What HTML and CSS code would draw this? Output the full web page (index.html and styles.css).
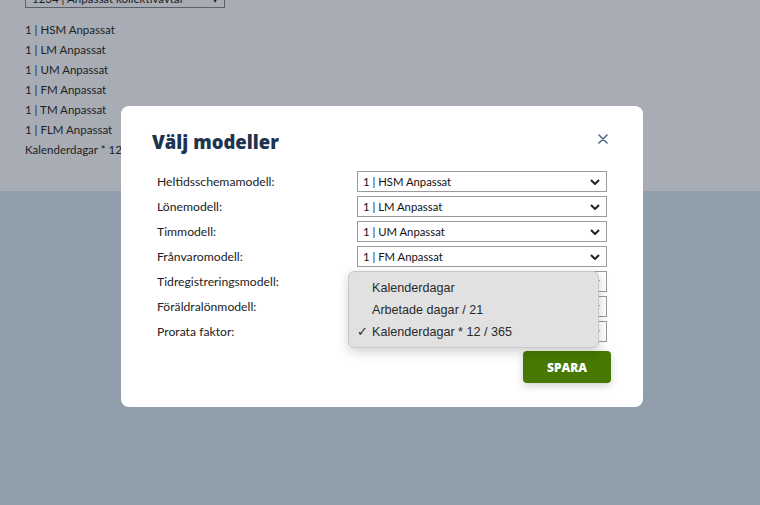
FILE: index.html
```html
<!doctype HTML>
<html>
    <head>
        <title>Välj modeller</title>
        <meta content="text/html;charset=utf-8" http-equiv="Content-Type">
        <meta name="viewport" content="width=device-width, initial-scale=1">
        <link rel="stylesheet" href="styles.css">
    </head>

    <body>
        <section class="page">
            <div class="page-select">1234 | Anpassat kollektivavtal <span class="caret">▾</span></div>
            <ul class="summary">
                <li>1 | HSM Anpassat</li>
                <li>1 | LM Anpassat</li>
                <li>1 | UM Anpassat</li>
                <li>1 | FM Anpassat</li>
                <li>1 | TM Anpassat</li>
                <li>1 | FLM Anpassat</li>
                <li>Kalenderdagar * 12 / 365</li>
            </ul>
        </section>
        <section class="page-lower"></section>

        <div class="modal">
            <header class="modal-head">
                <h1>Välj modeller</h1>
                <button class="close" title="Stäng">
                    <svg width="10" height="10" viewBox="0 0 10 10"><path d="M1 1 L9 9 M9 1 L1 9" stroke="#4d6a8e" stroke-width="1.6" stroke-linecap="round"/></svg>
                </button>
            </header>

            <div class="rows">
                <div class="row"><label>Heltidsschemamodell:</label><div class="select">1 | HSM Anpassat<svg class="chev" width="10" height="6" viewBox="0 0 10 6"><path d="M1 1 L5 5 L9 1" fill="none" stroke="#222" stroke-width="2"/></svg></div></div>
                <div class="row"><label>Lönemodell:</label><div class="select">1 | LM Anpassat<svg class="chev" width="10" height="6" viewBox="0 0 10 6"><path d="M1 1 L5 5 L9 1" fill="none" stroke="#222" stroke-width="2"/></svg></div></div>
                <div class="row"><label>Timmodell:</label><div class="select">1 | UM Anpassat<svg class="chev" width="10" height="6" viewBox="0 0 10 6"><path d="M1 1 L5 5 L9 1" fill="none" stroke="#222" stroke-width="2"/></svg></div></div>
                <div class="row"><label>Frånvaromodell:</label><div class="select">1 | FM Anpassat<svg class="chev" width="10" height="6" viewBox="0 0 10 6"><path d="M1 1 L5 5 L9 1" fill="none" stroke="#222" stroke-width="2"/></svg></div></div>
                <div class="row"><label>Tidregistreringsmodell:</label><div class="select">1 | TM Anpassat<svg class="chev" width="10" height="6" viewBox="0 0 10 6"><path d="M1 1 L5 5 L9 1" fill="none" stroke="#222" stroke-width="2"/></svg></div></div>
                <div class="row"><label>Föräldralönmodell:</label><div class="select">1 | FLM Anpassat<svg class="chev" width="10" height="6" viewBox="0 0 10 6"><path d="M1 1 L5 5 L9 1" fill="none" stroke="#222" stroke-width="2"/></svg></div></div>
                <div class="row"><label>Prorata faktor:</label><div class="select">Kalenderdagar * 12 / 365<svg class="chev" width="10" height="6" viewBox="0 0 10 6"><path d="M1 1 L5 5 L9 1" fill="none" stroke="#222" stroke-width="2"/></svg></div></div>
            </div>

            <div class="actions">
                <button class="save">SPARA</button>
            </div>

            <ul class="menu">
                <li>Kalenderdagar</li>
                <li>Arbetade dagar / 21</li>
                <li class="checked">Kalenderdagar * 12 / 365</li>
            </ul>
        </div>
    </body>
</html>
```

FILE: styles.css
```css
html, body {
    margin: 0;
    padding: 0;
}

body {
    font-family: Lato, "Open Sans", sans-serif;
    font-size: 11.5px;
    color: #1c1f24;
    background: #919eab;
    height: 505px;
    overflow: hidden;
}

.page {
    background: #a8acb4;
    height: 201px;
    padding: 0 25px;
    box-sizing: border-box;
}

.page-select {
    width: 200px;
    height: 18px;
    margin-top: -10px;
    border: 1px solid #5c6068;
    box-sizing: border-box;
    padding: 0 6px;
    line-height: 16px;
    display: flex;
    justify-content: space-between;
}

.summary {
    list-style: none;
    margin: 12px 0 0;
    padding: 0;
}

.summary li {
    line-height: 20px;
}

.modal {
    position: absolute;
    top: 106px;
    left: 121px;
    width: 522px;
    height: 301px;
    box-sizing: border-box;
    background: #fff;
    border-radius: 8px;
    padding: 24px 32px 0 31px;
}

.modal-head {
    display: flex;
    justify-content: space-between;
    align-items: center;
}

.modal-head h1 {
    margin: 0;
    font-family: "Open Sans", sans-serif;
    font-size: 18.5px;
    font-weight: 800;
    color: #1d3451;
    line-height: 24px;
}

.close {
    border: 0;
    background: none;
    padding: 0;
    margin-top: -6px;
    margin-right: 3px;
    display: flex;
}

.rows {
    margin-top: 15px;
    padding-left: 5px;
}

.row {
    display: flex;
    align-items: center;
    height: 25px;
}

.row label {
    width: 200px;
    font-size: 12.2px;
    color: #222;
}

.select {
    width: 250px;
    height: 21px;
    border: 1px solid #9a9a9a;
    box-sizing: border-box;
    padding: 0 6px 0 5px;
    display: flex;
    align-items: center;
    justify-content: space-between;
    font-size: 11.3px;
    color: #111;
}

.actions {
    display: flex;
    justify-content: flex-end;
    margin-top: 7px;
}

.save {
    width: 88px;
    height: 32px;
    border: 0;
    border-radius: 4px;
    background: #477800;
    color: #fff;
    font-family: "Open Sans", sans-serif;
    font-weight: 800;
    font-size: 12px;
    box-shadow: 0 3px 8px rgba(0, 0, 0, 0.18);
}

.menu {
    position: absolute;
    top: 165px;
    left: 227px;
    width: 251px;
    height: 77px;
    box-sizing: border-box;
    margin: 0;
    padding: 5px 0;
    list-style: none;
    background: #e1e1e1;
    border: 1px solid #c8c8c8;
    border-radius: 6px;
    box-shadow: 0 4px 12px rgba(0, 0, 0, 0.18);
    font-family: "Liberation Sans", Arial, sans-serif;
    font-size: 12.6px;
    color: #2a2a2a;
}

.menu li {
    height: 22px;
    line-height: 22px;
    padding-left: 23px;
    position: relative;
}

.menu li.checked::before {
    content: "✓";
    position: absolute;
    left: 8px;
}
```
